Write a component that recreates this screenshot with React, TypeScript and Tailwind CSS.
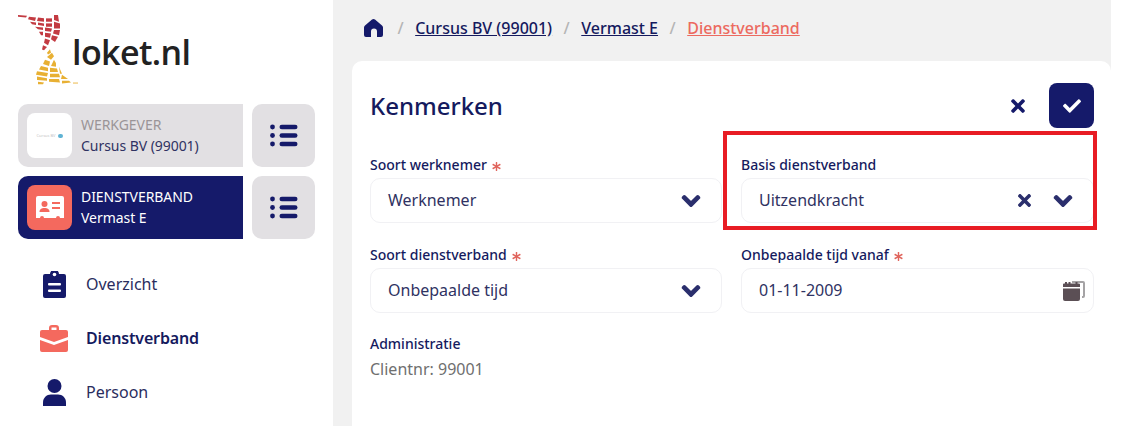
import { FaChevronDown, FaTimes, FaCheck, FaAsterisk } from "react-icons/fa";

const NAVY = "#151a6a";

function Logo() {
  const red = [
    "0,0 9,1 8,3 0,2",
    "11,2 18,3 17,7 10,5",
    "20,3 26,4 26,8 19,7",
    "28,4 34,4 34,8 28,8",
    "12,8 18,9 18,12 14,11",
    "20,9 26,10 26,13 20,12",
    "28,10 34,10 34,14 28,14",
    "36,0 40,0 41,8 36,6",
    "36,8 42,10 42,16 36,16",
    "17,14 25,15 25,18 20,17",
    "27,15 34,16 33,20 27,19",
    "36,18 42,18 41,24 35,22",
    "21,20 25,20 25,24 23,24",
    "27,21 33,22 32,27 27,26",
    "34,24 40,26 37,32 33,29",
    "27,28 32,30 30,36 26,33",
    "25,36 29,38 26,42 24,41",
  ];
  const yellow = [
    "29,36 32,32 33,36 30,38",
    "34,36 36,40 33,44 29,41",
    "27,44 32,46 31,51 25,49",
    "36,44 38,48 38,52 33,51",
    "23,51 30,53 30,57 21,55",
    "32,53 39,54 40,58 32,58",
    "41,52 44,60 42,60",
    "19,57 30,59 29,63 18,61",
    "32,60 41,60 42,64 32,64",
    "44,61 50,66 43,66",
    "19,63 29,65 29,68 19,67",
    "31,66 41,66 42,70 31,69",
    "44,68 51,68 53,70 44,71",
    "20,69 26,70 25,72 20,72",
    "55,70 60,70 60,71 55,71",
  ];
  return (
    <svg width="62" height="74" viewBox="0 0 62 74" className="shrink-0">
      <g transform="translate(0,1) scale(1,0.84)" fill="#c33b42">
        {red.map((p, i) => (
          <polygon key={i} points={p} />
        ))}
      </g>
      <g transform="translate(0,7) scale(1,0.88)" fill="#e8b033">
        {yellow.map((p, i) => (
          <polygon key={i} points={p} />
        ))}
      </g>
    </svg>
  );
}

function ListIcon() {
  return (
    <svg width="28" height="23" viewBox="0 0 28 23" fill={NAVY}>
      <circle cx="2.500" cy="3" r="2.400" />
      <circle cx="2.500" cy="11.500" r="2.400" />
      <circle cx="2.500" cy="20" r="2.400" />
      <rect x="9.500" y="0.700" width="18" height="4.600" rx="2.300" />
      <rect x="9.500" y="9.200" width="18" height="4.600" rx="2.300" />
      <rect x="9.500" y="17.700" width="18" height="4.600" rx="2.300" />
    </svg>
  );
}

function HomeIcon() {
  return (
    <svg width="19" height="18" viewBox="0 0 19 18" fill={NAVY} className="shrink-0">
      <path d="M9.500 0c.5 0 1 .2 1.500.6l7 5.900c.7.6 1 1.200 1 2V16a2 2 0 0 1-2 2h-4v-5.500a3 3 0 0 0-6 0V18H2a2 2 0 0 1-2-2V8.500c0-.8.3-1.400 1-2L8 .6c.5-.4 1-.6 1.500-.6z" />
    </svg>
  );
}

function PersonIcon() {
  return (
    <svg width="23" height="27" viewBox="0 0 23 27" fill={NAVY}>
      <circle cx="11.500" cy="7" r="7" />
      <path d="M0 27v-3.500C0 19 3.500 15.500 8 15.500h7c4.500 0 8 3.500 8 8V27z" />
    </svg>
  );
}

function IdTile() {
  return (
    <svg width="28" height="24" viewBox="0 0 28 24">
      <path
        d="M2 0h24a2 2 0 0 1 2 2v20h-4a2 2 0 0 0-4 0H8a2 2 0 0 0-4 0H0V2a2 2 0 0 1 2-2z"
        fill="#fff"
      />
      <circle cx="8.500" cy="8" r="3" fill="#f4695e" />
      <path d="M3.500 16c0-3 2-4 5-4s5 1 5 4z" fill="#f4695e" />
      <rect x="16" y="6" width="8" height="2" fill="#f4695e" />
      <rect x="16" y="11" width="8" height="2" fill="#f4695e" />
    </svg>
  );
}

function Clipboard() {
  return (
    <svg width="23" height="27" viewBox="0 0 23 27">
      <path
        d="M2 3h5a4.500 4.500 0 0 1 9 0h5a2 2 0 0 1 2 2v20a2 2 0 0 1-2 2H2a2 2 0 0 1-2-2V5a2 2 0 0 1 2-2z"
        fill={NAVY}
      />
      <circle cx="11.500" cy="3.500" r="1.800" fill="#fff" />
      <rect x="5" y="12" width="13" height="2.500" rx="1" fill="#fff" />
      <rect x="5" y="18.500" width="13" height="2.500" rx="1" fill="#fff" />
    </svg>
  );
}

function Briefcase() {
  return (
    <svg width="28" height="27" viewBox="0 0 28 27">
      <path d="M9 6V3a3 3 0 0 1 3-3h4a3 3 0 0 1 3 3v3h-2.500V2.500h-5V6z" fill="#f4695e" />
      <path d="M2 5h24a2 2 0 0 1 2 2v5L14 17 0 12V7a2 2 0 0 1 2-2z" fill="#f4695e" />
      <path d="M0 15l14 5 14-5v10a2 2 0 0 1-2 2H2a2 2 0 0 1-2-2z" fill="#f4695e" />
    </svg>
  );
}

function Calendar() {
  return (
    <svg width="22" height="20" viewBox="0 0 22 20">
      <path d="M9 0h11a2 2 0 0 1 2 2v13a2 2 0 0 1-2 2h-1v-2h1V2H9z" fill="#a5a3a5" />
      <path d="M4 2.500h1.500V1h2v1.500h5V1h2v1.500H16a1 1 0 0 1 1 1V6H0V3.500a1 1 0 0 1 1-1h1V1h2z" fill="#5b4f55" />
      <path d="M0 7.500h17V18a2 2 0 0 1-2 2H2a2 2 0 0 1-2-2z" fill="#5b4f55" />
    </svg>
  );
}

function Req() {
  return <FaAsterisk className="inline-block ml-[5px] text-[#e0645c] align-[-1px]" size={9} />;
}

function Label({ children, req }: { children: string; req?: boolean }) {
  return (
    <div className="h-[15px] leading-[15px] text-[14px] font-medium text-[#151a5e]">
      {children}
      {req && <Req />}
    </div>
  );
}

function Field({ value, clear, date }: { value: string; clear?: boolean; date?: boolean }) {
  return (
    <div className="mt-[6px] h-[45px] flex items-center rounded-[10px] border border-[#f1f1f4] pl-[17px] pr-[20px] text-[16px] text-[#2f3262] bg-white">
      <span className="flex-1 pb-[2px]">{value}</span>
      {clear && <FaTimes className="text-[#2b2f6d] mr-[19px]" size={19} />}
      {date ? (
        <span className="-mr-[12px] flex">
          <Calendar />
        </span>
      ) : (
        <FaChevronDown className="text-[#2b2f6d] [stroke-width:40px]" size={20} />
      )}
    </div>
  );
}

function SideCard({
  active,
  title,
  sub,
  tile,
}: {
  active?: boolean;
  title: string;
  sub: string;
  tile: React.ReactNode;
}) {
  return (
    <div className="flex gap-[9px] h-[63px]">
      <div
        className={`w-[225px] rounded-l-[10px] flex items-center pl-[9px] gap-[9px] ${
          active ? "bg-[#151a6a]" : "bg-[#e2e0e3]"
        }`}
      >
        <div
          className={`w-[45px] h-[45px] rounded-[8px] flex items-center justify-center ${
            active ? "bg-[#f4695e]" : "bg-white"
          }`}
        >
          {tile}
        </div>
        <div className="text-[14px] leading-[21px] pb-[2px] tracking-[-0.05px]">
          <div className={active ? "text-white" : "text-[#9a9497]"}>{title}</div>
          <div className={active ? "text-white" : "text-[#2f3262]"}>{sub}</div>
        </div>
      </div>
      <div className="w-[63px] rounded-[10px] bg-[#e2e0e3] flex items-center justify-center">
        <ListIcon />
      </div>
    </div>
  );
}

function NavItem({
  icon,
  label,
  bold,
}: {
  icon: React.ReactNode;
  label: string;
  bold?: boolean;
}) {
  return (
    <div className="flex items-center h-[54px]">
      <div className="w-[28px] flex justify-center mr-[18px]">{icon}</div>
      <span
        className={`text-[16px] ${
          bold ? "font-semibold text-[#151a5e] tracking-[-0.15px]" : "text-[#2a2d5e]"
        }`}
      >
        {label}
      </span>
    </div>
  );
}

function Slash() {
  return <span className="text-[#b5b5b5] mx-[11.5px]">/</span>;
}

export default function App() {
  return (
    <div
      className="w-[1111px] h-[426px] flex overflow-hidden bg-white"
      style={{ fontFamily: '"Noto Sans", sans-serif' }}
    >
      <aside className="w-[333px] shrink-0 bg-white pl-[18px]">
        <div className="h-[104px] pt-[14px] flex items-start">
          <Logo />
          <span
            className="ml-[-8px] mt-[15px] text-[34px] leading-[46px] font-semibold text-[#222222] tracking-[-0.6px]"
            style={{ fontFamily: '"Open Sans", sans-serif' }}
          >
            loket.nl
          </span>
        </div>
        <div className="flex flex-col gap-[9px]">
          <SideCard
            title="WERKGEVER"
            sub="Cursus BV (99001)"
            tile={
              <span className="flex items-center gap-[2px]">
                <span className="text-[4px] text-[#c4c4c4]">Cursus BV</span>
                <span className="w-[5px] h-[4px] rounded-sm bg-[#5fb3d4]" />
              </span>
            }
          />
          <SideCard active title="DIENSTVERBAND" sub="Vermast E" tile={<IdTile />} />
        </div>
        <nav className="mt-[18px] pl-[22px]">
          <NavItem icon={<Clipboard />} label="Overzicht" />
          <NavItem icon={<Briefcase />} label="Dienstverband" bold />
          <NavItem icon={<PersonIcon />} label="Persoon" />
        </nav>
      </aside>
      <main className="flex-1 bg-[#f1f1f1] pl-[19px]">
        <div className="h-[61px] flex items-center pl-[12px] pb-[5px] text-[16px] font-medium">
          <span className="mr-[3px] flex">
            <HomeIcon />
          </span>
          <Slash />
          <a className="underline text-[#151a5e]">Cursus BV (99001)</a>
          <Slash />
          <a className="underline text-[#151a5e]">Vermast E</a>
          <Slash />
          <a className="underline text-[#ec6a60]">Dienstverband</a>
        </div>
        <section className="bg-white rounded-t-[10px] h-[400px] pl-[18px] pr-[17px] pt-[22px]">
          <div className="flex items-center justify-between h-[45px]">
            <h1 className="text-[24px] font-medium text-[#151a5e]">Kenmerken</h1>
            <div className="flex items-center gap-[21px]">
              <FaTimes className="text-[#151a6a]" size={20} />
              <div className="w-[45px] h-[45px] rounded-[8px] bg-[#151a6a] flex items-center justify-center">
                <FaCheck className="text-white" size={18} />
              </div>
            </div>
          </div>
          <div className="grid grid-cols-[352px_353px] gap-x-[19px] gap-y-[24px] mt-[29px]">
            <div>
              <Label req>Soort werknemer</Label>
              <Field value="Werknemer" />
            </div>
            <div className="relative">
              <Label>Basis dienstverband</Label>
              <Field value="Uitzendkracht" clear />
              <div className="absolute left-[-18px] right-[-3px] top-[-26px] h-[99px] border-[4px] border-[#e81c24]" />
            </div>
            <div>
              <Label req>Soort dienstverband</Label>
              <Field value="Onbepaalde tijd" />
            </div>
            <div>
              <Label req>Onbepaalde tijd vanaf</Label>
              <Field value="01-11-2009" date />
            </div>
          </div>
          <div className="mt-[23px]">
            <Label>Administratie</Label>
            <div className="mt-[7px] text-[16px] leading-[22px] text-[#6f6f6f]">Clientnr: 99001</div>
          </div>
        </section>
      </main>
    </div>
  );
}
